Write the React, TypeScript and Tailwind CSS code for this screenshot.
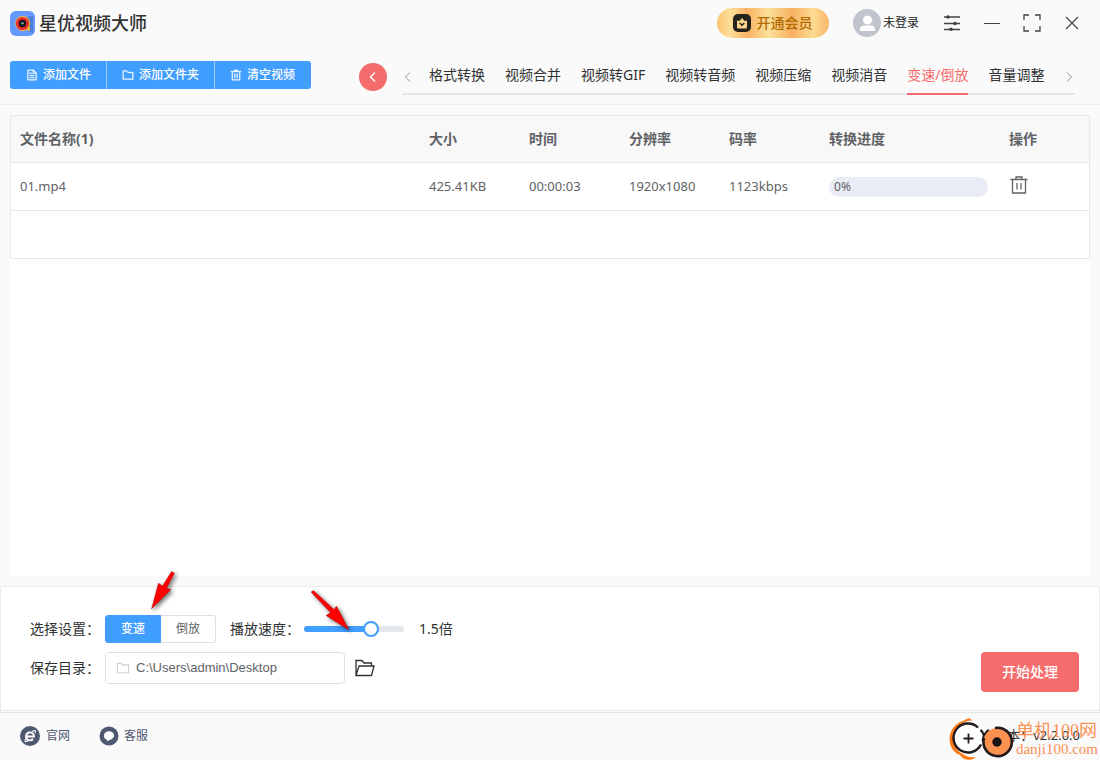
import React, { useState } from "react";
import clsx from "clsx";

const tabs = [
  "格式转换",
  "视频合并",
  "视频转GIF",
  "视频转音频",
  "视频压缩",
  "视频消音",
  "变速/倒放",
  "音量调整",
];

const files = [
  {
    name: "01.mp4",
    size: "425.41KB",
    time: "00:00:03",
    resolution: "1920x1080",
    bitrate: "1123kbps",
    progress: 0,
  },
];

const paths = {
  document:
    "M832 384H576V128H192v768h640zm-26.496-64L640 154.496V320zM160 64h480l256 256v608a32 32 0 0 1-32 32H160a32 32 0 0 1-32-32V96a32 32 0 0 1 32-32m160 448h384v64H320zm0-192h160v64H320zm0 384h384v64H320z",
  folder:
    "M128 192v640h768V320H485.76L357.504 192zm-32-64h287.872l128.384 128H928a32 32 0 0 1 32 32v576a32 32 0 0 1-32 32H96a32 32 0 0 1-32-32V160a32 32 0 0 1 32-32",
  trash:
    "M160 256H96a32 32 0 0 1 0-64h256V95.936a32 32 0 0 1 32-32h256a32 32 0 0 1 32 32V192h256a32 32 0 1 1 0 64h-64v672a32 32 0 0 1-32 32H192a32 32 0 0 1-32-32zm448-64v-64H416v64zM224 896h576V256H224zm192-128a32 32 0 0 1-32-32V416a32 32 0 0 1 64 0v320a32 32 0 0 1-32 32m192 0a32 32 0 0 1-32-32V416a32 32 0 0 1 64 0v320a32 32 0 0 1-32 32",
};

const Icon = ({ name, className }: { name: keyof typeof paths; className: string }) => (
  <svg viewBox="0 0 1024 1024" fill="currentColor" className={className}>
    <path d={paths[name]} />
  </svg>
);

const Chevron = ({ right, className }: { right?: boolean; className: string }) => (
  <svg viewBox="0 0 12 12" fill="none" stroke="currentColor" className={className}>
    <path d={right ? "M4 1.5 8.5 6 4 10.5" : "M8 1.5 3.5 6 8 10.5"} />
  </svg>
);

const AppLogo = () => (
  <svg viewBox="0 0 25 25" className="size-[25px]">
    <rect width="25" height="25" rx="6" fill="#6699ff" />
    <path d="M16 6l7-1v17l-5-2z" fill="#4f7fd8" />
    <path d="M12.5 5a7.5 7.5 0 1 0 4 14l3.5 1-.5-5A7.5 7.5 0 0 0 12.5 5z" fill="#f5c12e" />
    <circle cx="12.5" cy="12.5" r="6.6" fill="#e82c2c" />
    <circle cx="12.5" cy="12.5" r="3.8" fill="#151515" />
    <circle cx="12.5" cy="12.3" r="1.3" fill="#7d96aa" />
  </svg>
);

const TitleBar = () => (
  <div className="flex h-[47px] items-center pr-2 pb-px pl-2.5">
    <AppLogo />
    <h1 className="ml-1 text-lg leading-6 font-medium text-[#333]">星优视频大师</h1>
    <button className="ml-auto flex h-[30px] w-28 items-center justify-center gap-[5px] rounded-full bg-[linear-gradient(90deg,#fbc373_0%,#fce09a_12%,#f9b162_27%,#fce09a_46%,#f9b162_67%,#fddb93_86%,#f9b66b_100%)] text-sm font-medium text-[#b06a00]">
      <svg viewBox="0 0 18 18" className="size-[18px]">
        <rect width="18" height="18" rx="5" fill="#26221c" />
        <path d="M4 6.5 6.5 7 9 4l2.5 3 2.5-.5v6.5a1.5 1.5 0 0 1-1.5 1.5h-7A1.5 1.5 0 0 1 4 13z" fill="#fbd58b" />
        <path d="M6.7 9 9 11.2 11.3 9" fill="none" stroke="#26221c" strokeWidth="1.5" />
      </svg>
      开通会员
    </button>
    <button className="ml-6 flex items-center gap-0.5 text-xs text-[#222]">
      <svg viewBox="0 0 28 28" className="size-7">
        <circle cx="14" cy="14" r="14" fill="#c0c4cc" />
        <circle cx="14.5" cy="11" r="4.5" fill="#fff" />
        <path d="M7 22v-1.5a4 4 0 0 1 4-4h7a4 4 0 0 1 4 4V22z" fill="#fff" />
      </svg>
      未登录
    </button>
    <div className="ml-[13px] flex text-[#444]">
      <button aria-label="设置" className="flex h-8 w-10 items-center justify-center">
        <svg viewBox="0 0 16 16" stroke="currentColor" className="size-4">
          <path d="M0 2h16M0 8.5h16M0 14.5h16" strokeWidth="1.3" />
          <g fill="currentColor" stroke="none">
            <circle cx="4" cy="2" r="1.8" />
            <circle cx="11" cy="8.5" r="1.8" />
            <circle cx="7" cy="14.2" r="1.8" />
          </g>
        </svg>
      </button>
      <button aria-label="最小化" className="flex h-8 w-10 items-center justify-center">
        <svg viewBox="0 0 16 16" stroke="currentColor" className="size-4">
          <path d="M0 8.5h16" />
        </svg>
      </button>
      <button aria-label="最大化" className="flex h-8 w-10 items-center justify-center">
        <svg viewBox="0 0 18 18" fill="none" stroke="currentColor" strokeWidth="1.3" className="size-[18px]">
          <path d="M1 6V1h5M12 1h5v5M17 12v5h-5M6 17H1v-5" />
        </svg>
      </button>
      <button aria-label="关闭" className="flex h-8 w-10 items-center justify-center">
        <svg viewBox="0 0 14 14" stroke="currentColor" strokeWidth="1.2" className="size-3.5">
          <path d="m1 1 12 12M13 1 1 13" />
        </svg>
      </button>
    </div>
  </div>
);

const Toolbar = () => {
  const [active, setActive] = useState("变速/倒放");
  const action = "flex h-full items-center gap-[5px] px-[15px]";
  const actionIcon = "size-3 stroke-current stroke-[30]";

  return (
    <div className="flex h-[57px] items-start pt-3.5 pr-[25px] pl-2.5">
      <div className="flex h-7 shrink-0 overflow-hidden rounded-[3px] bg-[#409eff] text-xs font-medium text-white">
        <button className={clsx(action, "border-r border-[#a0cfff] pl-4")}>
          <Icon name="document" className={actionIcon} />
          添加文件
        </button>
        <button className={clsx(action, "border-r border-[#a0cfff]")}>
          <Icon name="folder" className={actionIcon} />
          添加文件夹
        </button>
        <button className={clsx(action, "pr-4")}>
          <Icon name="trash" className={actionIcon} />
          清空视频
        </button>
      </div>
      <button
        aria-label="返回"
        className="mt-0.5 ml-12 flex size-7 shrink-0 items-center justify-center rounded-full bg-[#f56c6c] text-white"
      >
        <Chevron className="size-3 stroke-[1.4]" />
      </button>
      <nav className="ml-[15px] flex h-[34px] min-w-0 flex-1 items-stretch border-b-2 border-[#e4e7ed] text-sm text-[#303133]">
        <button aria-label="上一页" className="w-[27px] shrink-0 text-[#909399]">
          <Chevron className="size-3" />
        </button>
        <div className="flex flex-1 gap-5">
          {tabs.map((tab) => (
            <button
              key={tab}
              onClick={() => setActive(tab)}
              className={clsx(
                "-mb-0.5 shrink-0 border-b-2 pb-1 whitespace-nowrap",
                active === tab ? "border-[#f56c6c] text-[#f56c6c]" : "border-transparent"
              )}
            >
              {tab}
            </button>
          ))}
        </div>
        <button aria-label="下一页" className="shrink-0 text-[#909399]">
          <Chevron right className="size-3" />
        </button>
      </nav>
    </div>
  );
};

const FileTable = () => (
  <table className="w-full table-fixed border-separate border-spacing-0 border border-b-0 border-[#e8e8e8] text-left text-[13px] text-[#606266] [&_td]:border-b [&_td]:border-[#e8e8e8] [&_td]:px-[9px] [&_th]:border-b [&_th]:border-[#e8e8e8] [&_th]:px-[9px]">
    <colgroup>
      <col />
      <col className="w-[100px]" />
      <col className="w-[100px]" />
      <col className="w-[100px]" />
      <col className="w-[100px]" />
      <col className="w-[180px]" />
      <col className="w-[89px]" />
    </colgroup>
    <thead>
      <tr className="h-[47px] bg-[#f8f8f8] text-sm">
        <th>文件名称({files.length})</th>
        <th>大小</th>
        <th>时间</th>
        <th>分辨率</th>
        <th>码率</th>
        <th>转换进度</th>
        <th>操作</th>
      </tr>
    </thead>
    <tbody>
      {files.map((file) => (
        <tr key={file.name} className="h-12">
          <td>{file.name}</td>
          <td>{file.size}</td>
          <td>{file.time}</td>
          <td>{file.resolution}</td>
          <td>{file.bitrate}</td>
          <td>
            <div className="mr-[3px] h-5 overflow-hidden rounded-full bg-[#e9ecf4] px-[5px] text-xs leading-5">
              {file.progress}%
            </div>
          </td>
          <td>
            <button aria-label="删除" className="block pb-1">
              <svg viewBox="0 0 20 20" fill="none" stroke="currentColor" strokeWidth="1.3" className="size-5">
                <path d="M1.5 4.500h17M3.500 4.500v13.500h13V4.500M7 4.500V2h6v2.500M8 8v6.500M12 8v6.500" />
              </svg>
            </button>
          </td>
        </tr>
      ))}
      <tr className="h-12">
        <td colSpan={7} />
      </tr>
    </tbody>
  </table>
);

const SpeedSlider = ({ value, onChange }: { value: number; onChange: (v: number) => void }) => (
  <div className="relative h-1.5 w-[100px] rounded-full bg-[#e4e7ed]">
    <div
      className="h-full rounded-full bg-[#409eff]"
      style={{ width: `${((value - 0.5) / 1.5) * 100}%` }}
    />
    <input
      id="speed"
      type="range"
      min={0.5}
      max={2}
      step={0.1}
      value={value}
      onChange={(e) => onChange(Number(e.target.value))}
      className="absolute -top-[5px] -left-2 h-4 w-[116px] appearance-none bg-transparent [&::-webkit-slider-thumb]:size-4 [&::-webkit-slider-thumb]:appearance-none [&::-webkit-slider-thumb]:rounded-full [&::-webkit-slider-thumb]:border-2 [&::-webkit-slider-thumb]:border-solid [&::-webkit-slider-thumb]:border-[#409eff] [&::-webkit-slider-thumb]:bg-white"
    />
  </div>
);

// red pointers laid over the mode switch and the speed slider
const Pointers = () => (
  <svg
    viewBox="141 567 220 72"
    fill="#ff0000"
    stroke="#8c1010"
    strokeWidth="0.4"
    className="pointer-events-none absolute -top-5 left-[140px] h-[72px] w-[220px] drop-shadow-[2px_2px_2px_rgba(0,0,0,0.55)]"
  >
    <path d="M171.5 571.5 174.500 573 166.500 588.500 171 589.500 151.500 609 158.500 583 162.500 586z" />
    <path d="M311 592 313.500 590.500 334 609.500 336.500 606 349 630 326 615.500 330.500 612.500z" />
  </svg>
);

const Settings = () => {
  const [mode, setMode] = useState("变速");
  const [speed, setSpeed] = useState(1.5);
  const [dir, setDir] = useState("C:\\Users\\admin\\Desktop");

  return (
    <section className="relative mt-2.5 flex h-[125px] items-start border border-[#ebebeb] bg-white pt-7 pr-5 pl-[29px] text-sm text-[#303133]">
      <div className="flex flex-col gap-[9px]">
        <div className="flex h-7 items-center">
          <span className="w-[75px]">选择设置：</span>
          <div className="flex h-7 w-[111px] text-xs">
            {["变速", "倒放"].map((item) => (
              <button
                key={item}
                onClick={() => setMode(item)}
                className={clsx(
                  "flex-1 border first:rounded-l-[3px] last:rounded-r-[3px]",
                  mode === item
                    ? "border-[#409eff] bg-[#409eff] font-medium text-white"
                    : "border-[#dcdfe6] text-[#606266] first:border-r-0 last:border-l-0"
                )}
              >
                {item}
              </button>
            ))}
          </div>
          <label htmlFor="speed" className="ml-3.5 w-[74px]">
            播放速度：
          </label>
          <SpeedSlider value={speed} onChange={setSpeed} />
          <span className="ml-[15px]">{speed}倍</span>
        </div>
        <div className="flex h-8 items-center">
          <label htmlFor="dir" className="w-[75px]">
            保存目录：
          </label>
          <div className="flex h-8 w-60 items-center rounded border border-[#dcdfe6] px-2.5">
            <Icon name="folder" className="size-3.5 text-[#c0c4cc]" />
            <input
              id="dir"
              value={dir}
              onChange={(e) => setDir(e.target.value)}
              className="ml-1.5 min-w-0 flex-1 font-['Liberation_Sans',Arial,sans-serif] text-[13px] text-[#606266] outline-none"
            />
          </div>
          <button aria-label="打开目录" className="ml-2.5">
            <svg viewBox="0 0 20 18" fill="none" stroke="#303133" strokeWidth="1.3" className="h-[18px] w-5">
              <path d="M1 16.500V1.500h6l2 2.500h7.500v3M1 16.500 4 7h15l-2.500 9.500z" />
            </svg>
          </button>
        </div>
      </div>
      <button className="mt-[37px] ml-auto h-10 w-[98px] rounded bg-[#f56c6c] text-sm font-medium text-white">
        开始处理
      </button>
      <Pointers />
    </section>
  );
};

const Watermark = () => (
  <div className="pointer-events-none absolute top-1 right-0.5 flex items-center gap-0.5 text-[#fb9155]">
    <svg viewBox="950 717 65 44" fill="none" className="h-11 w-[65px]">
      <path d="M973 720.5c-1-3-5-2.500-8 0-18 5-19 29-4 34.500 4 6 11 6 16 2.500-6 0-10-1-14-4-13-6-11-26 2-31 3-1.500 5-2 8-2z" fill="#fb7a17" />
      <circle cx="969.5" cy="738.5" r="14" fill="#fff" />
      <path d="M979 727.500a14.500 14.500 0 1 0 3 17" stroke="#241a1c" strokeWidth="2.4" />
      <path d="M969.500 733.500v10M964.500 738.500h10" stroke="#241a1c" strokeWidth="1.8" />
      <path d="M981.500 730c4 3 4 6 2 11M990 730c-4 2-5 5-6 10" stroke="#241a1c" strokeWidth="2.2" />
      <circle cx="998.5" cy="742" r="14" fill="#fc9150" />
      <path d="M996 728a14.200 14.200 0 1 1-11 10" stroke="#241a1c" strokeWidth="2.6" />
      <circle cx="998" cy="742" r="4.7" fill="#1b1416" />
    </svg>
    <div className="font-['Liberation_Serif','Noto_Sans_CJK_SC',serif]">
      <div className="text-lg leading-5">单机100网</div>
      <div className="text-[15px] leading-4">danji100.com</div>
    </div>
  </div>
);

const Footer = () => (
  <footer className="relative mt-px flex h-12 items-center border-t border-[#e6e6e6] px-5 pb-px text-xs text-[#4e5871]">
    <a href="#site" className="flex items-center gap-1.5">
      <svg viewBox="0 0 20 20" fill="none" className="size-5">
        <circle cx="10" cy="10" r="10" fill="#4e5871" />
        <path d="M6.5 10.500h7.500a4 4 0 1 0-1 2.500" stroke="#fff" strokeWidth="1.9" />
        <path d="M6 12.500c-2 3.500-1 4 2.500 2M12 5.500c4-2 4-1 3 1.500" stroke="#fff" strokeWidth="1.1" />
      </svg>
      官网
    </a>
    <a href="#service" className="ml-[29px] flex items-center gap-[5px]">
      <svg viewBox="0 0 20 20" className="size-5">
        <circle cx="10" cy="10" r="9.5" fill="#4e5871" />
        <path d="M10 5.200c3 0 5 1.900 5 4.300 0 2-1.500 3.600-3.600 4.200L8 15.200v-1.400C6 13.200 5 11.500 5 9.500c0-2.400 2-4.300 5-4.300z" fill="#fff" />
      </svg>
      客服
    </a>
    <span className="ml-auto text-[13px] text-[#303133]">版本：v2.2.0.0</span>
    <Watermark />
  </footer>
);

const App = () => {
  return (
    <div className="flex min-h-screen flex-col overflow-hidden bg-[#fafafa] font-['Noto_Sans','Noto_Sans_CJK_SC',sans-serif]">
      <header className="border-b border-[#ebebeb]">
        <TitleBar />
        <Toolbar />
      </header>
      <main className="mx-2.5 mt-2.5 flex-1 bg-white">
        <FileTable />
      </main>
      <Settings />
      <Footer />
    </div>
  );
};

export default App;
